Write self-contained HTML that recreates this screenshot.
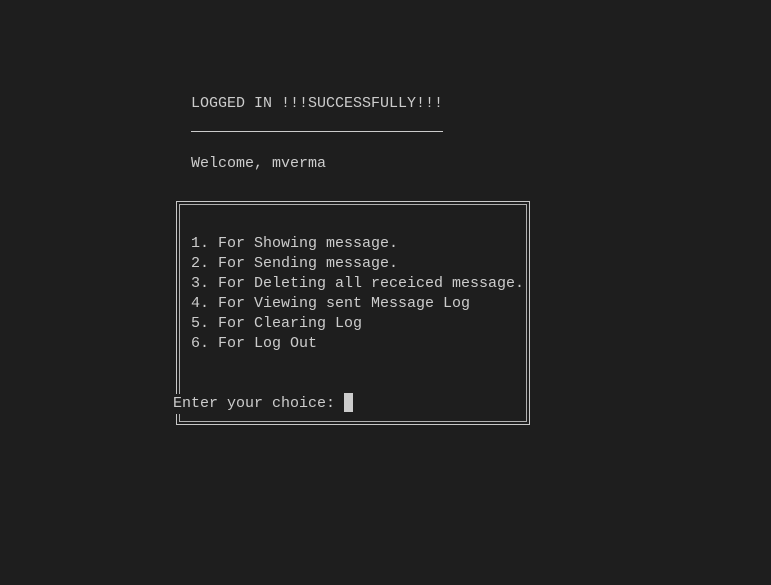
<!DOCTYPE html>
<html><head><style>
body{margin:0;width:771px;height:585px;background:#1e1e1e;overflow:hidden;position:relative;font-family:"Liberation Mono",monospace;font-size:15px;color:#cccccc}
.t{position:absolute;line-height:20px;white-space:pre;height:20px}
.b{position:absolute;border:1px solid #c8c8c8}
</style></head><body>
<div class="t" style="left:191px;top:94px">LOGGED IN !!!SUCCESSFULLY!!!</div>
<div style="position:absolute;left:191px;top:131px;width:252px;height:1px;background:#cccccc"></div>
<div class="t" style="left:191px;top:154px">Welcome, mverma</div>
<div class="b" style="left:176px;top:201px;width:352px;height:222px"></div>
<div class="b" style="left:179px;top:204px;width:346px;height:216px;border-color:#b0b0b0"></div>
<div class="t" style="left:191px;top:234px">1. For Showing message.</div>
<div class="t" style="left:191px;top:254px">2. For Sending message.</div>
<div class="t" style="left:191px;top:274px">3. For Deleting all receiced message.</div>
<div class="t" style="left:191px;top:294px">4. For Viewing sent Message Log</div>
<div class="t" style="left:191px;top:314px">5. For Clearing Log</div>
<div class="t" style="left:191px;top:334px">6. For Log Out</div>
<div class="t" style="left:173px;top:394px;background:#1e1e1e;width:170px">Enter your choice: </div>
<div style="position:absolute;left:344px;top:393px;width:9px;height:19px;background:#cccccc"></div>
</body></html>
